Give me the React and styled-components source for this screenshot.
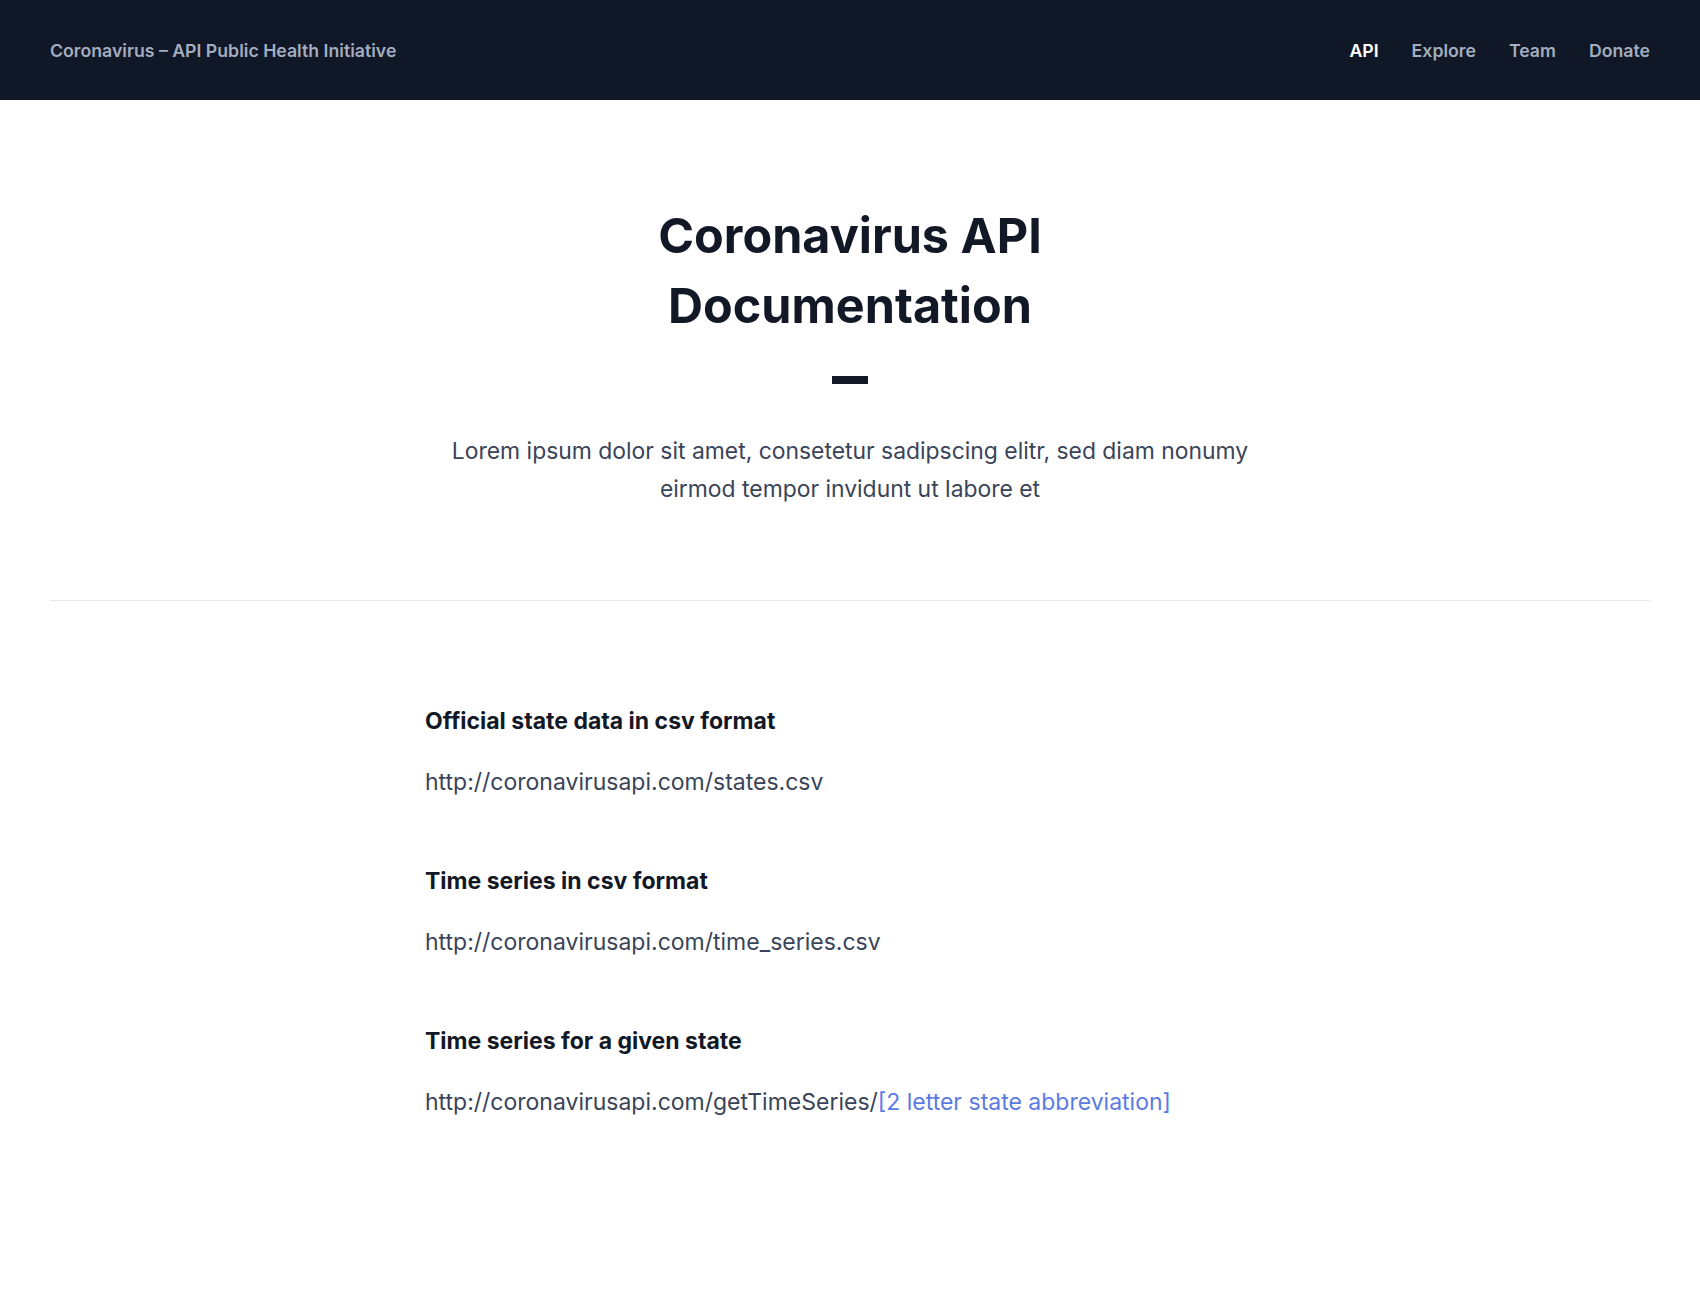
import React from "react";
import styled, { createGlobalStyle } from "styled-components";

const GlobalStyle = createGlobalStyle`
  body {
    margin: 0;
    background: #fff;
    font-family: Inter, "Noto Sans", sans-serif;
  }
`;

const endpoints = [
  { title: "Official state data in csv format", url: "http://coronavirusapi.com/states.csv" },
  { title: "Time series in csv format", url: "http://coronavirusapi.com/time_series.csv" },
  {
    title: "Time series for a given state",
    url: "http://coronavirusapi.com/getTimeSeries/",
    param: "[2 letter state abbreviation]",
  },
];

function App() {
  return (
    <>
      <GlobalStyle />
      <Header>
        <Brand>Coronavirus – API Public Health Initiative</Brand>
        <Nav>
          <NavLink active>API</NavLink>
          <NavLink>Explore</NavLink>
          <NavLink>Team</NavLink>
          <NavLink>Donate</NavLink>
        </Nav>
      </Header>

      <Hero>
        <Title>
          Coronavirus API
          <br />
          Documentation
        </Title>
        <Dash />
        <Lead>
          Lorem ipsum dolor sit amet, consetetur sadipscing elitr, sed diam nonumy
          <br />
          eirmod tempor invidunt ut labore et
        </Lead>
      </Hero>

      <Divider />

      <Docs>
        {endpoints.map((e) => (
          <Endpoint key={e.title}>
            <EndpointTitle>{e.title}</EndpointTitle>
            <EndpointUrl>
              {e.url}
              {e.param && <Param>{e.param}</Param>}
            </EndpointUrl>
          </Endpoint>
        ))}
      </Docs>
    </>
  );
}

export default App;

const Header = styled.header`
  height: 100px;
  background: #101726;
  display: flex;
  align-items: center;
  justify-content: space-between;
  padding: 0 50px;
`;

const Brand = styled.div`
  color: #a3adbf;
  font-size: 17.7px;
  font-weight: 600;
`;

const Nav = styled.nav`
  display: flex;
  gap: 33px;
`;

const NavLink = styled.a`
  color: ${(p) => (p.active ? "#ffffff" : "#a3adbf")};
  font-size: 17.7px;
  font-weight: 600;
  cursor: pointer;
`;

const Hero = styled.section`
  display: flex;
  flex-direction: column;
  align-items: center;
  text-align: center;
  padding-top: 101px;
`;

const Title = styled.h1`
  margin: 0;
  color: #121826;
  font-size: 48.5px;
  line-height: 70px;
  font-weight: 700;
`;

const Dash = styled.div`
  width: 36px;
  height: 8px;
  margin-top: 35px;
  background: #121826;
`;

const Lead = styled.p`
  margin: 48px 0 0;
  color: #3a4458;
  font-size: 22.9px;
  line-height: 38px;
`;

const Divider = styled.hr`
  margin: 92px 50px 0;
  border: none;
  border-top: 1px solid #e5e7eb;
`;

const Docs = styled.main`
  width: 850px;
  margin: 0 auto;
  padding: 105px 0 100px;
  display: flex;
  flex-direction: column;
  gap: 69px;
`;

const Endpoint = styled.div`
  display: flex;
  flex-direction: column;
  gap: 31px;
`;

const EndpointTitle = styled.h3`
  margin: 0;
  color: #121826;
  font-size: 23px;
  line-height: 30px;
  font-weight: 700;
`;

const EndpointUrl = styled.div`
  color: #3a4458;
  font-size: 23px;
  line-height: 30px;
`;

const Param = styled.span`
  color: #5b7be3;
`;
